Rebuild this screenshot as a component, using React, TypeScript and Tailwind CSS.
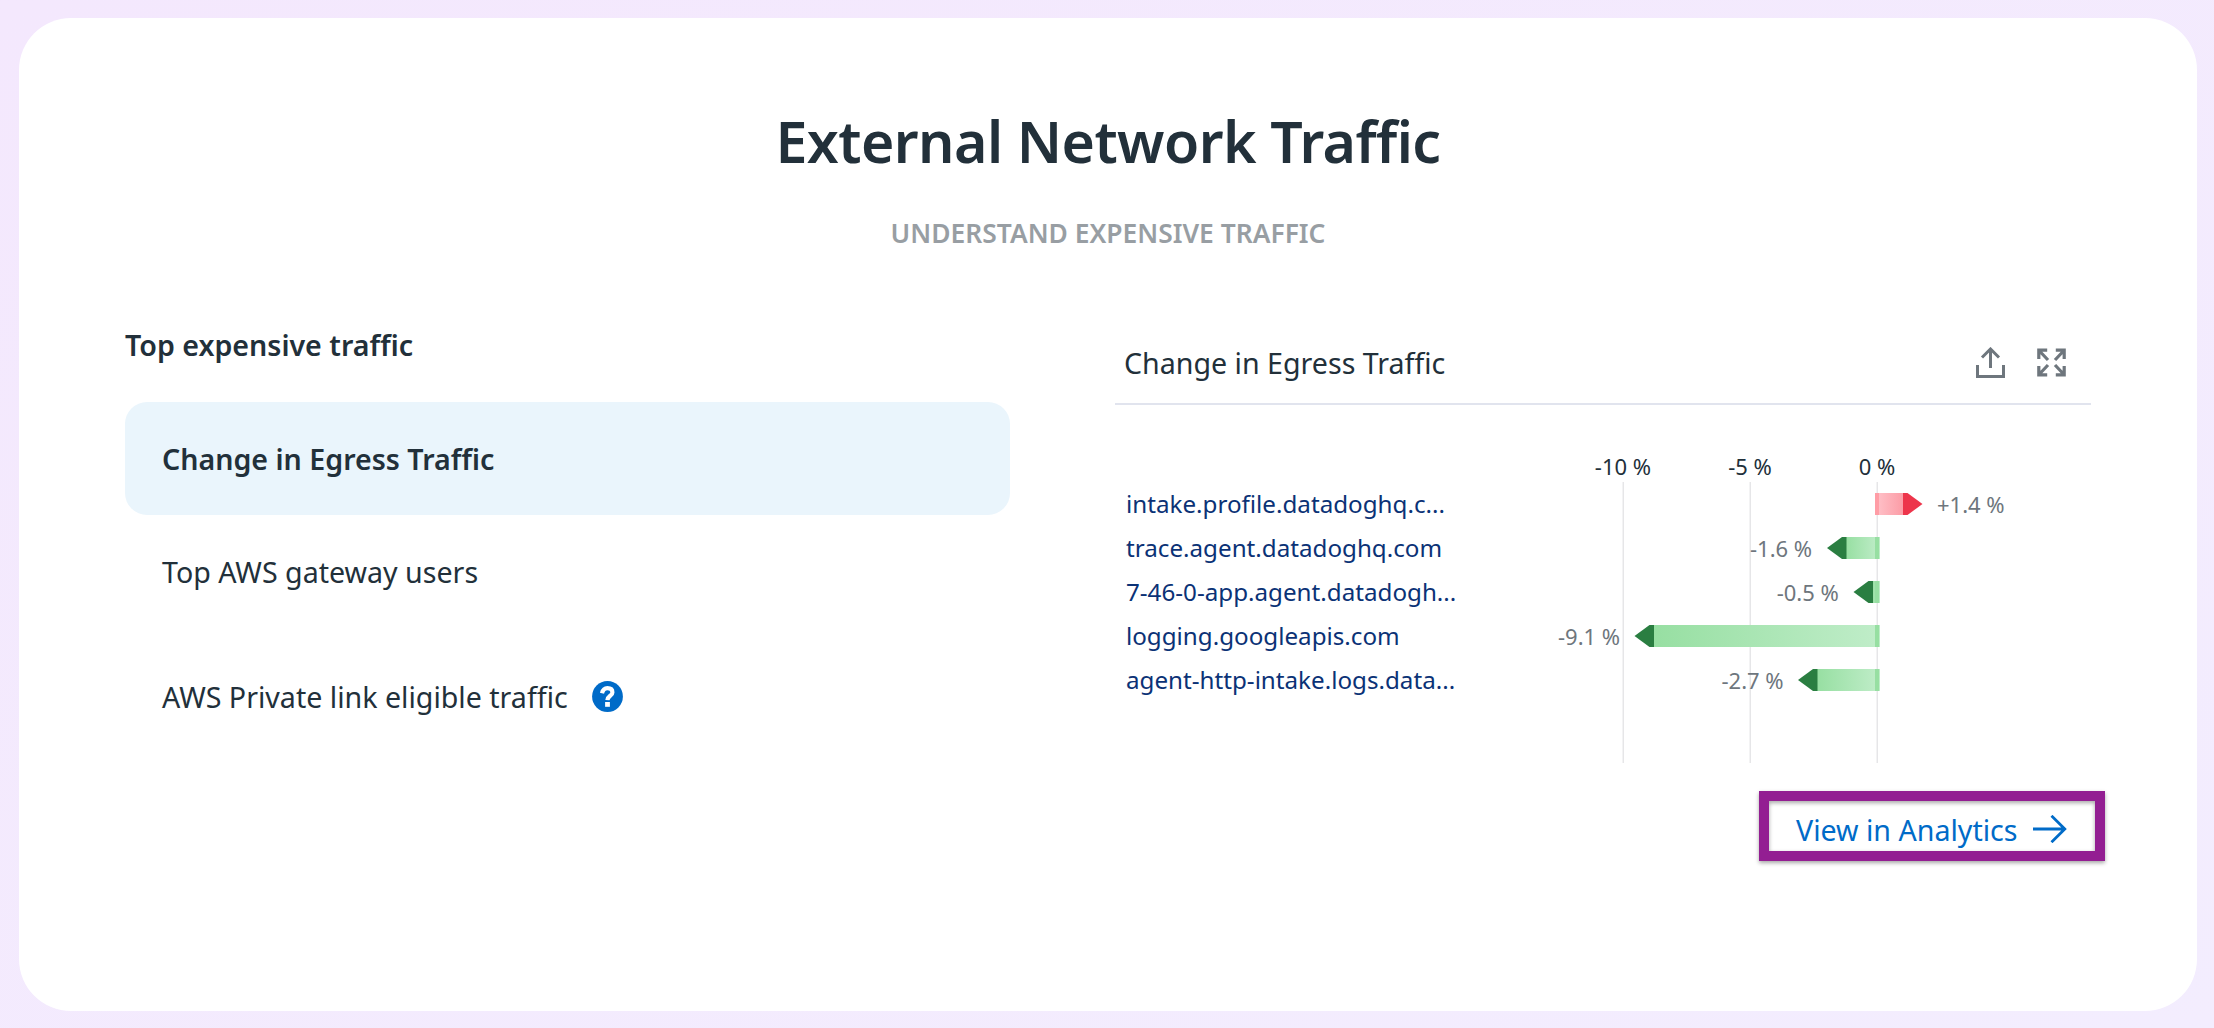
import React from "react";

const bars = [
  { label: "intake.profile.datadoghq.c...", value: "+1.4 %", tip: 382.5, textX: 397 },
  { label: "trace.agent.datadoghq.com", value: "-1.6 %", tip: 287, textX: 210 },
  { label: "7-46-0-app.agent.datadogh...", value: "-0.5 %", tip: 313.5, textX: 236.7 },
  { label: "logging.googleapis.com", value: "-9.1 %", tip: 94.5, textX: 18 },
  { label: "agent-http-intake.logs.data...", value: "-2.7 %", tip: 258, textX: 181.5 },
];

const ticks = [
  { label: "-10 %", x: 83 },
  { label: "-5 %", x: 210 },
  { label: "0 %", x: 337 },
];

function ChangeChart() {
  return (
    <svg width="551" height="314" viewBox="0 0 551 314" className="block shrink-0" fontSize="22">
      <defs>
        <linearGradient id="rise" x1="0" x2="1" y1="0" y2="0">
          <stop offset="0" stopColor="#ffc3ca" />
          <stop offset="1" stopColor="#fc9ca6" />
        </linearGradient>
        <linearGradient id="fall" x1="0" x2="1" y1="0" y2="0">
          <stop offset="0" stopColor="#97dfa2" />
          <stop offset="1" stopColor="#c0edc9" />
        </linearGradient>
      </defs>
      {ticks.map((t) => (
        <g key={t.label}>
          <rect x={t.x - 1} y="32" width="1" height="281" fill="#f3f3f4" />
          <rect x={t.x} y="32" width="1" height="281" fill="#e6e6e8" />
          <text x={t.x} y="25" textAnchor="middle" fill="#22303a">{t.label}</text>
        </g>
      ))}
      {bars.map((b, i) => {
        const y = 43 + i * 44;
        const up = b.tip > 337;
        return (
          <g key={b.label}>
            {up ? (
              <>
                <rect x="335" y={y} width="28" height="22" fill="url(#rise)" />
                <rect x="335" y={y} width="4" height="22" fill="#ff9da6" />
                <path d={`M363 ${y}H367.5L${b.tip} ${y + 11}L367.5 ${y + 22}H363Z`} fill="#ed354b" />
              </>
            ) : (
              <>
                <rect x={b.tip + 19} y={y} width={340 - b.tip - 19} height="22" fill="url(#fall)" />
                <rect x="335" y={y} width="4" height="22" fill="#97dfa2" />
                <path d={`M${b.tip + 19.5} ${y}H${b.tip + 15}L${b.tip} ${y + 11}L${b.tip + 15} ${y + 22}H${b.tip + 19.5}Z`} fill="#2a7e41" />
              </>
            )}
            <text x={b.textX} y={y + 20} fill="#6e767d">{b.value}</text>
          </g>
        );
      })}
    </svg>
  );
}

function ShareIcon() {
  return (
    <svg width="30" height="32" viewBox="0 0 30 32" fill="none" stroke="#6e767d" className="block">
      <path d="M1.5 18V29.5H27.5V18" strokeWidth="3" />
      <path d="M14.5 21V2.5M6 10.5L14.5 2L23 10.5" strokeWidth="3" />
    </svg>
  );
}

function ExpandIcon() {
  return (
    <svg width="30" height="30" viewBox="0 0 30 30" fill="none" stroke="#6e767d" strokeWidth="3.2" className="block">
      <path d="M1.8 11V2.2H10.2M2.5 3L11 12" />
      <path d="M18.8 2.2H27.2V11M26.5 3L18 12" />
      <path d="M1.8 18V26.8H10.2M2.5 26L11 17" />
      <path d="M18.8 26.8H27.2V18M26.5 26L18 17" />
    </svg>
  );
}

function HelpIcon() {
  return (
    <svg width="31" height="31" viewBox="0 0 31 31" className="block">
      <circle cx="15.5" cy="15.5" r="15.4" fill="#006bc8" />
      <path d="M10 12.2C10.9 8.8 12.6 7.2 15.4 7.2C18.6 7.2 20.4 8.8 20.4 11.4C20.4 15 15.6 14.6 15.4 19.2" fill="none" stroke="#fff" strokeWidth="4.2" />
      <rect x="13.1" y="21" width="4.8" height="4.8" fill="#fff" />
    </svg>
  );
}

export default function App() {
  return (
    <div className="flex h-[1028px] w-[2214px] bg-linear-to-br from-[#f4e8fd] to-[#f3edfe] pt-[18px] pr-[17px] pb-[17px] pl-[19px] font-['Noto_Sans',sans-serif] text-[28.6px] text-[#22303a]">
      <main className="flex w-full flex-col rounded-[52px] bg-white pt-[87px]">
        <h1 className="text-center text-[57.2px] leading-[72px] font-semibold tracking-[-0.01em]">External Network Traffic</h1>
        <h2 className="mt-[38px] text-center text-[26.4px] leading-[36px] font-semibold text-[#989ea3]">UNDERSTAND EXPENSIVE TRAFFIC</h2>

        <div className="mt-[74px] flex pl-[106px]">
          <section className="w-[885px]">
            <h3 className="leading-[40px] font-semibold">Top expensive traffic</h3>
            <div className="mt-[37px] flex h-[113px] items-center rounded-[22px] bg-[#eaf5fc] pt-[2px] pl-[37px] font-semibold">Change in Egress Traffic</div>
            <div className="flex h-[114px] items-center pl-[37px]">Top AWS gateway users</div>
            <div className="flex h-[135px] items-center gap-6 pl-[37px]">
              <span className="pt-[2px]">AWS Private link eligible traffic</span>
              <HelpIcon />
            </div>
          </section>

          <section className="ml-[105px] w-[990px]">
            <header className="flex h-[80px] w-[976px] items-center justify-between border-b-2 border-[#e1e4ee] pr-[24px] pb-[2px] pl-[9px]">
              <span>Change in Egress Traffic</span>
              <div className="flex items-center gap-[31px]">
                <ShareIcon />
                <ExpandIcon />
              </div>
            </header>
            <div className="mt-[45px] flex w-[976px]">
              <ul className="w-[425px] pt-8 pl-[11px] text-[24.2px] leading-[44px] text-[#0b3276]">
                {bars.map((b) => (
                  <li key={b.label}>{b.label}</li>
                ))}
              </ul>
              <ChangeChart />
            </div>
            <div className="mt-[27px] ml-[644px] flex h-[70px] w-[346px] items-center border-[10px] border-[#931e92] pl-[27px] text-[#006bc8] shadow-[0_2px_4px_rgba(0,0,0,0.35),inset_0_2px_4px_rgba(0,0,0,0.35)]">
              <span className="pt-2">View in Analytics</span>
              <svg width="34" height="28" viewBox="0 0 34 28" fill="none" stroke="#006bc8" strokeWidth="2.8" className="mt-[6px] ml-[15px]">
                <path d="M0 14H32M18.5 0.8L31.8 14L18.5 27.2" />
              </svg>
            </div>
          </section>
        </div>
      </main>
    </div>
  );
}
